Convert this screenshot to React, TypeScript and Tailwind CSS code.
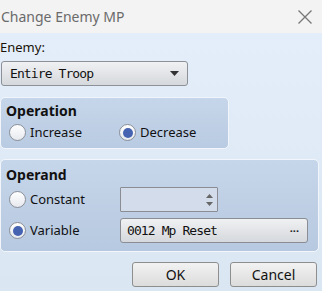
import React from 'react'

const ui = { fontFamily: '"Noto Sans", "Open Sans", sans-serif' }
const mono = { fontFamily: '"DejaVu Sans Mono", "Liberation Mono", monospace' }

function Radio({ label, checked, width }: { label: string; checked?: boolean; width: string }) {
  return (
    <div className={`flex items-center gap-[4px] ${width}`}>
      <span className="flex h-[17px] w-[17px] shrink-0 items-center justify-center rounded-full border border-[#8a8f98] bg-gradient-to-b from-white to-[#e6e9ee]">
        {checked && <span className="h-[10px] w-[10px] rounded-full bg-[#4563b0]" />}
      </span>
      <span className="text-[13px] leading-none text-[#111]">{label}</span>
    </div>
  )
}

function Button({ label }: { label: string }) {
  return (
    <button className="flex h-[25px] w-[87px] items-center justify-center rounded-[3px] border border-[#8e8e8e] bg-gradient-to-b from-[#f2f2f2] to-[#dcdcdc] text-[14px] text-[#111]">
      {label}
    </button>
  )
}

export default function App() {
  return (
    <div className="flex h-[291px] w-[322px] flex-col overflow-hidden" style={ui}>
      <header className="flex h-[33px] shrink-0 items-center justify-between bg-[#f3f3f3] pl-[1px] pr-[9px]">
        <span className="text-[14px] text-[#6a6a6a]">Change Enemy MP</span>
        <svg width="16" height="16" viewBox="0 0 16 16" className="text-[#777]">
          <path d="M1.5 1.5 L14.5 14.5 M14.5 1.5 L1.5 14.5" stroke="currentColor" strokeWidth="1.3" fill="none" />
        </svg>
      </header>

      <main className="flex flex-1 flex-col bg-gradient-to-b from-[#e4eefb] to-[#dbe6f3] pr-[4px]">
        <label className="mt-[6px] text-[13px] leading-[16px] text-[#1a1208]">Enemy:</label>
        <div className="mt-[6px] ml-[1px] flex h-[25px] w-[187px] items-center justify-between rounded-[3px] border border-[#8d9096] bg-gradient-to-b from-[#f0f1f3] to-[#d5d8dc] pl-[8px] pr-[8px]">
          <span className="text-[13px] tracking-[-0.9px] text-[#111]" style={mono}>Entire Troop</span>
          <svg width="9" height="5" viewBox="0 0 9 5">
            <path d="M0 0 H9 L4.5 5 Z" fill="#333" />
          </svg>
        </div>

        <section className="mt-[11px] flex h-[52px] w-[229px] flex-col rounded-[5px] border border-[#f2f6fb] bg-gradient-to-b from-[#c6d6ea] to-[#b9cbe2] px-[5px] pt-[4px]">
          <h2 className="text-[14px] font-bold leading-[18px] text-[#111]">Operation</h2>
          <div className="flex h-[25px] items-center pl-[3px]">
            <Radio label="Increase" width="w-[110px]" />
            <Radio label="Decrease" checked width="w-[90px]" />
          </div>
        </section>

        <section className="mt-[10px] flex h-[93px] w-[319px] flex-col rounded-[5px] border border-[#f2f6fb] bg-gradient-to-b from-[#c6d6ea] to-[#b7c9e0] px-[5px] pt-[6px]">
          <h2 className="text-[14px] font-bold leading-[18px] text-[#111]">Operand</h2>
          <div className="mt-[3px] flex h-[25px] items-center pl-[3px]">
            <Radio label="Constant" width="w-[111px]" />
            <div className="flex h-[25px] w-[98px] items-center justify-end rounded-[1px] border border-[#8a8d93] bg-[#d2dcea] pr-[4px]">
              <svg width="7" height="14" viewBox="0 0 7 14">
                <path d="M0 5 L3.5 1 L7 5 Z M0 9 L3.5 13 L7 9 Z" fill="#666" />
              </svg>
            </div>
          </div>
          <div className="mt-[6px] flex h-[25px] items-center pl-[3px]">
            <Radio label="Variable" checked width="w-[111px]" />
            <div className="flex h-[25px] w-[188px] items-center justify-between rounded-[3px] border border-[#8a8d93] bg-gradient-to-b from-[#f0f1f3] to-[#d5d8dc] pl-[6px] pr-[8px]">
              <span className="text-[13px] tracking-[-0.9px] text-[#111]" style={mono}>0012 Mp Reset</span>
              <span className="text-[11px] font-bold leading-none text-[#222]">···</span>
            </div>
          </div>
        </section>

        <footer className="mt-[10px] flex justify-end gap-[11px] pr-[1px]">
          <Button label="OK" />
          <Button label="Cancel" />
        </footer>
      </main>
    </div>
  )
}
